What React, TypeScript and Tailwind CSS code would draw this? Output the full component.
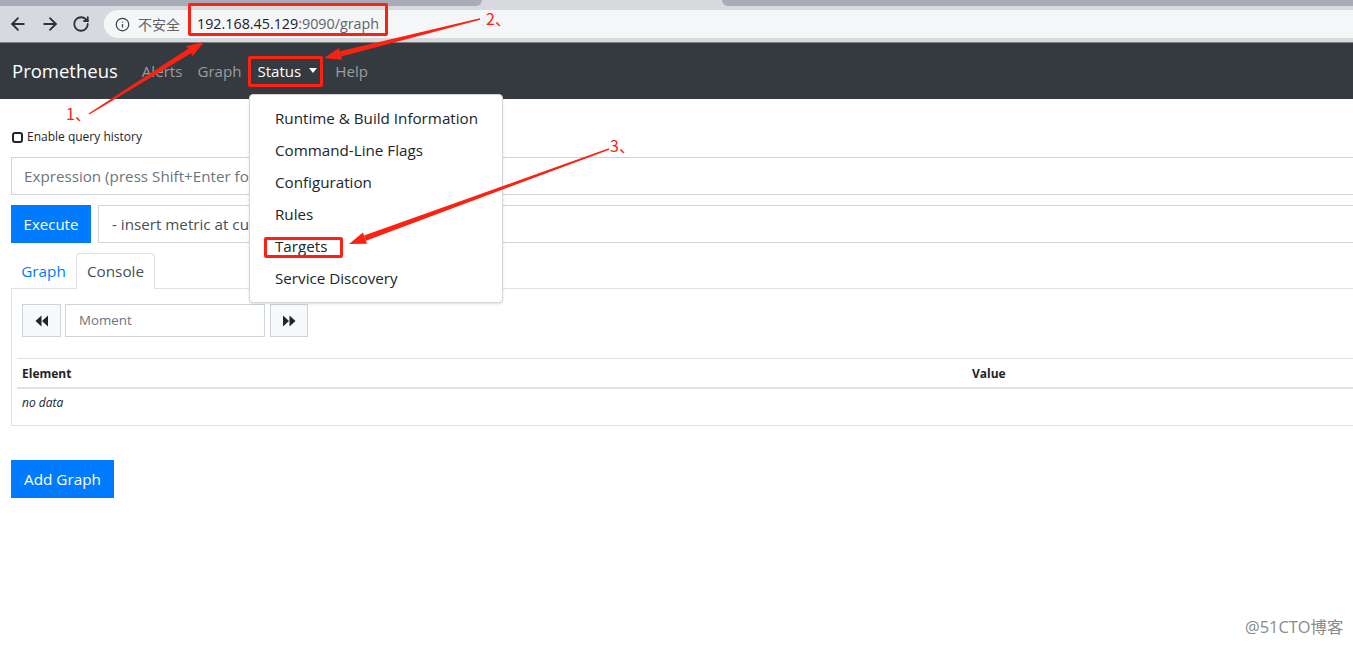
import React from "react";
import { ArrowLeft, ArrowRight, RotateCw, Info } from "lucide-react";

const font = "font-['Open_Sans','Noto_Sans_CJK_SC',sans-serif]";

function Arrow({ x1, y1, x2, y2, w = 5.5 }: { x1: number; y1: number; x2: number; y2: number; w?: number }) {
  const a = Math.atan2(y2 - y1, x2 - x1);
  const L = 17;
  const H = 6;
  const bx = x2 - L * Math.cos(a);
  const by = y2 - L * Math.sin(a);
  const nx = -Math.sin(a);
  const ny = Math.cos(a);
  return (
    <g>
      <polygon
        fill="#fb2213"
        points={`${x1 + nx * 0.7},${y1 + ny * 0.7} ${bx + nx * (w / 2)},${by + ny * (w / 2)} ${bx - nx * (w / 2)},${by - ny * (w / 2)} ${x1 - nx * 0.7},${y1 - ny * 0.7}`}
      />
      <polygon
        fill="#fb2213"
        points={`${x2},${y2} ${bx + nx * H},${by + ny * H} ${bx - nx * H},${by - ny * H}`}
      />
    </g>
  );
}

function Rewind({ flip }: { flip?: boolean }) {
  return (
    <svg width="13" height="12" viewBox="0 0 13 12" className={flip ? "rotate-180" : ""}>
      <path d="M6.5 0.5v11L0.5 6zM13 0.5v11L7 6z" fill="#212529" />
    </svg>
  );
}

const items = ["Runtime & Build Information", "Command-Line Flags", "Configuration", "Rules", "Targets", "Service Discovery"];

export default function App() {
  return (
    <div className={`${font} relative h-[646px] w-[1353px] overflow-hidden bg-white text-[#212529]`}>
      {/* tab strip */}
      <div className="flex h-[6px] bg-[#d8d9de]">
        <div className="h-full w-[482px] rounded-br-md bg-[#a8abb8]" />
        <div className="h-full flex-1" />
        <div className="h-full w-[631px] rounded-bl-md bg-[#a8abb8]" />
      </div>
      {/* address bar */}
      <div className="flex h-[37px] items-start border-b border-[#7d7f85] bg-[#d8d9de] pt-[4px]">
        <div className="ml-[8px] flex h-[28px] w-[90px] items-center gap-[12px] text-[#2f3136]">
          <ArrowLeft size={20} strokeWidth={2.2} />
          <ArrowRight size={20} strokeWidth={2.2} />
          <RotateCw size={18} strokeWidth={2.4} />
        </div>
        <div className="ml-[6px] flex h-[28px] flex-1 items-center rounded-l-full bg-[#f5f6f8] pl-[11px]">
          <Info size={15} strokeWidth={2} className="text-[#3c4043]" />
          <span className="ml-[8px] text-[14px] text-[#5f6368]">不安全</span>
          <span className="ml-[17px] text-[14.3px] text-[#202124]">
            192.168.45.129<span className="text-[#5f6368]">:9090/graph</span>
          </span>
        </div>
      </div>
      {/* navbar */}
      <nav className="flex h-[56px] items-center bg-[#343a40] pl-[12px]">
        <span className="text-[18.5px] text-white">Prometheus</span>
        <div className="ml-[24px] flex items-center gap-[15px] text-[15.1px] text-[#9b9d9f]">
          <span>Alerts</span>
          <span>Graph</span>
          <span className="ml-[1px] flex items-center text-white">
            Status
            <span className="ml-[8px] h-0 w-0 border-x-[4.5px] border-t-[5px] border-x-transparent border-t-white" />
          </span>
          <span className="ml-[3px]">Help</span>
        </div>
      </nav>
      {/* content */}
      <main className="w-[1373px] pl-[11px]">
        <label className="mt-[30px] flex h-[16px] items-center gap-[4px] pl-[1px] text-[12px]">
          <span className="h-[11px] w-[11px] rounded-[3px] border-2 border-[#212529]" />
          Enable query history
        </label>
        <div className="mt-[12px] flex h-[38px] items-center border border-[#ced4da] pl-[12px] text-[15.2px] text-[#6c757d]">
          Expression (press Shift+Enter for newlines)
        </div>
        <div className="mt-[10px] flex h-[38px] gap-[7px]">
          <button className="w-[80px] bg-[#007bff] text-[15px] text-white">Execute</button>
          <div className="flex flex-1 items-center border border-[#ced4da] pl-[13px] text-[15.2px] text-[#495057]">
            - insert metric at cursor -
          </div>
        </div>
        <div className="mt-[10px] flex h-[36px] items-end border-b border-[#dee2e6]">
          <span className="flex h-[35px] w-[65px] items-center justify-center pt-[1px] text-[15.3px] text-[#007bff]">Graph</span>
          <span className="-mb-px flex h-[36px] w-[79px] items-center justify-center rounded-t border border-b-0 border-[#dee2e6] bg-white text-[15.3px] text-[#495057]">
            Console
          </span>
        </div>
        <section className="h-[137px] border border-t-0 border-[#dee2e6] pl-[5px]">
          <div className="ml-[5px] flex gap-[4px] pt-[15px]">
            <span className="flex h-[33px] w-[39px] items-center justify-center border border-[#ced4da] bg-[#f8f9fa]">
              <Rewind />
            </span>
            <span className="flex h-[33px] w-[200px] items-center border border-[#ced4da] pl-[13px] text-[13.3px] text-[#6c757d]">
              Moment
            </span>
            <span className="ml-[1px] flex h-[33px] w-[38px] items-center justify-center border border-[#ced4da] bg-[#f8f9fa]">
              <Rewind flip />
            </span>
          </div>
          <table className="mt-[21px] w-full border-collapse text-[12px]">
            <thead>
              <tr className="h-[29px] border-t border-b-2 border-[#dee2e6] text-left font-bold">
                <th className="w-[955px] pl-[5px] pt-[2px] font-bold">Element</th>
                <th className="pt-[2px] font-bold">Value</th>
              </tr>
            </thead>
            <tbody>
              <tr className="h-[30px]">
                <td className="pl-[5px] italic">no data</td>
                <td />
              </tr>
            </tbody>
          </table>
        </section>
        <button className="mt-[34px] h-[38px] w-[103px] bg-[#007bff] text-[15.3px] text-white">Add Graph</button>
      </main>

      {/* dropdown */}
      <div className="absolute left-[249px] top-[94px] h-[209px] w-[254px] rounded border border-[#d5d6d8] bg-white py-[7px] shadow-sm">
        {items.map((t) => (
          <div key={t} className="flex h-[32px] items-center whitespace-nowrap pl-[25px] text-[15.2px]">
            {t}
          </div>
        ))}
      </div>

      {/* annotations */}
      <div className="absolute left-[188px] top-[3px] h-[33px] w-[200px] rounded-[2px] border-[3px] border-[#fb2213]" />
      <div className="absolute left-[248px] top-[56px] h-[31px] w-[75px] rounded-[2px] border-[3px] border-[#fb2213]" />
      <div className="absolute left-[264px] top-[237px] h-[21px] w-[79px] rounded-[2px] border-[3px] border-[#fb2213]" />
      <svg className="pointer-events-none absolute inset-0" width="1353" height="646">
        <Arrow x1={89} y1={114} x2={204} y2={42} />
        <Arrow x1={480} y1={19} x2={324} y2={58} />
        <Arrow x1={609} y1={149} x2={349} y2={244} />
      </svg>
      <span className="absolute left-[66px] top-[103px] font-['Noto_Sans_CJK_SC',sans-serif] text-[16px] leading-5 text-[#fb2213]">1、</span>
      <span className="absolute left-[486px] top-[8px] font-['Noto_Sans_CJK_SC',sans-serif] text-[16px] leading-5 text-[#fb2213]">2、</span>
      <span className="absolute left-[610px] top-[135px] font-['Noto_Sans_CJK_SC',sans-serif] text-[16px] leading-5 text-[#fb2213]">3、</span>
      <span className="absolute left-[1245px] top-[617px] text-[16.4px] leading-5 text-[#8a8a8a]">@51CTO博客</span>
    </div>
  );
}
